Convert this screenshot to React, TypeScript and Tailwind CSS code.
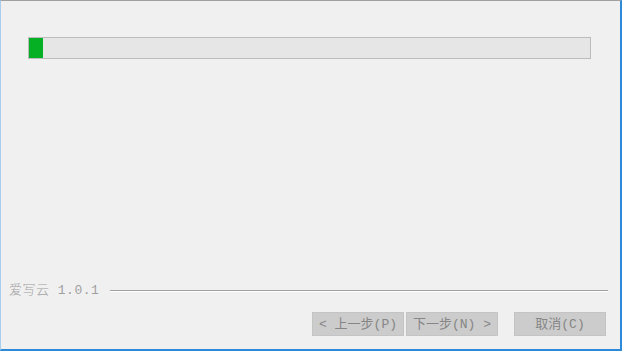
import React from "react";

const font = { fontFamily: '"Liberation Mono", "Noto Sans CJK SC", monospace' };

function Btn({ children, className = "" }: { children: React.ReactNode; className?: string }) {
  return (
    <div
      className={`flex h-[24px] w-[92px] items-center justify-center border border-[#c4c4c4] bg-[#cccccc] text-[13px] leading-none text-[#868686] ${className}`}
      style={font}
    >
      {children}
    </div>
  );
}

export default function App() {
  return (
    <div className="h-[353px] w-[629px] bg-white">
      <div className="flex h-[351px] w-[622px] flex-col border-l border-t border-r-2 border-b-2 border-l-[#a9cdee] border-t-[#a0a0a0] border-r-[#2c8ad8] border-b-[#2c8ad8] bg-[#f0f0f0]">
        <div className="ml-[27px] mt-[36px] flex h-[22px] w-[563px] border border-[#bcbcbc] bg-[#e6e6e6]">
          <div className="h-full w-[14px] bg-[#06b025]" />
        </div>
        <div className="flex-1" />
        <div className="flex items-center pl-[8px] pr-[12px]">
          <span className="text-[13px] leading-none font-light tracking-[0.5px] text-[#a0a0a0]" style={font}>
            爱写云 1.0.1
          </span>
          <div className="ml-[11px] h-[2px] flex-1 border-t border-b border-t-[#a0a0a0] border-b-white" />
        </div>
        <div className="mb-[13px] mt-[15px] flex justify-end pr-[14px]">
          <Btn>&lt; 上一步(P)</Btn>
          <Btn className="ml-[2px]">下一步(N) &gt;</Btn>
          <Btn className="ml-[16px]">取消(C)</Btn>
        </div>
      </div>
    </div>
  );
}
